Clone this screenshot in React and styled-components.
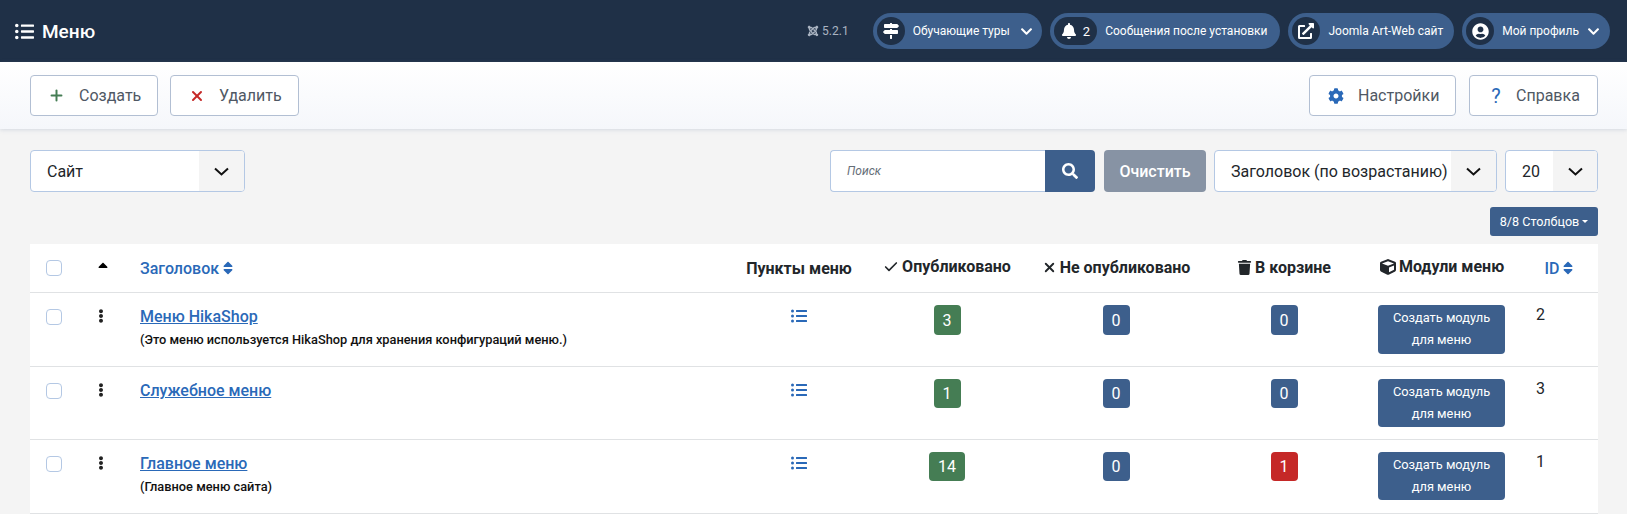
import styled, { createGlobalStyle } from "styled-components";
import {
  FaBell,
  FaChevronDown,
  FaCog,
  FaCube,
  FaEllipsisV,
  FaExternalLinkAlt,
  FaJoomla,
  FaListUl,
  FaMapSigns,
  FaSearch,
  FaSort,
  FaSortUp,
  FaTrash,
  FaUserCircle,
} from "react-icons/fa";
import { Check, Plus, X } from "lucide-react";

const colors = {
  dark: "#1f3047",
  blue: "#3d5f8c",
  link: "#2a69b8",
  green: "#457d54",
  red: "#c52827",
  page: "#f4f4f4",
  border: "#b2bfd3",
  field: "#b4c8e4",
  text: "#22262a",
};

const GlobalStyle = createGlobalStyle`
  html, body {
    margin: 0;
    padding: 0;
    height: 514px;
    overflow: hidden;
    background: ${colors.page};
    font-family: Roboto, "Liberation Sans", sans-serif;
    font-size: 16px;
    color: ${colors.text};
  }
  * { box-sizing: border-box; }
`;

const Header = styled.header`
  height: 62px;
  background: ${colors.dark};
  display: flex;
  align-items: center;
  padding: 0 17px 0 15px;
  color: #fff;
`;

const PageTitle = styled.h1`
  margin: 0;
  flex: 1;
  display: flex;
  align-items: center;
  gap: 8px;
  font-size: 19px;
  font-weight: 500;
  line-height: 1;
`;

const Version = styled.span`
  display: flex;
  align-items: center;
  gap: 3px;
  font-size: 12px;
  color: #aab4c2;
  margin-right: 24px;
`;

const Pills = styled.nav`
  display: flex;
  gap: 8px;
`;

const Pill = styled.div`
  height: 36px;
  display: flex;
  align-items: center;
  padding: 0 ${(p) => p.$end || 9}px 0 4px;
  background: ${colors.blue};
  border-radius: 18px;
  font-size: 12px;
  font-weight: 400;
  white-space: nowrap;
`;

const PillIcon = styled.span`
  min-width: 28px;
  height: 28px;
  padding: ${(p) => (p.$wide ? "0 7px" : "0")};
  display: flex;
  align-items: center;
  justify-content: center;
  gap: 6px;
  background: ${colors.dark};
  border-radius: 14px;
  font-size: 13px;
  margin-right: 8px;
`;

const PillCaret = styled(FaChevronDown)`
  font-size: 13px;
  margin-left: ${(p) => p.$gap || 8}px;
`;

const Toolbar = styled.div`
  height: 67px;
  padding: 13px 29px 0 30px;
  display: flex;
  gap: 12px;
  background: linear-gradient(#fff, #f5f7fb);
  box-shadow: 0 1px 4px rgba(120, 140, 170, 0.25);
`;

const ToolButton = styled.button`
  width: ${(p) => p.$width}px;
  height: 41px;
  padding: 0 0 0 ${(p) => p.$pad || 18}px;
  display: flex;
  align-items: center;
  gap: 14px;
  margin-left: ${(p) => (p.$push ? "auto" : "0")};
  margin-right: ${(p) => p.$after || 0}px;
  background: #fff;
  border: 1px solid ${colors.border};
  border-radius: 4px;
  font: inherit;
  color: #4f5864;
`;

const HelpMark = styled.span`
  width: 12px;
  text-align: center;
  font-size: 20px;
  line-height: 1;
  color: ${colors.link};
`;

const Content = styled.main`
  padding: 21px 29px 0 30px;
`;

const Filters = styled.div`
  display: flex;
  align-items: center;
  gap: 8px;
`;

const SelectBox = styled.div`
  width: ${(p) => p.$width}px;
  height: 42px;
  display: flex;
  align-items: center;
  background: #fff;
  border: 1px solid ${colors.field};
  border-radius: 4px;
  overflow: hidden;
  margin-right: ${(p) => (p.$grow ? "auto" : "0")};
`;

const SelectText = styled.span`
  flex: 1;
  padding-left: 16px;
  white-space: nowrap;
`;

const SelectArrow = styled.span`
  width: ${(p) => p.$width}px;
  height: 100%;
  flex: none;
  display: flex;
  align-items: center;
  justify-content: center;
  background: ${colors.page};
  color: #111;
`;

const SearchGroup = styled.div`
  width: 265px;
  height: 42px;
  display: flex;
  margin-right: 1px;
`;

const SearchInput = styled.div`
  flex: 1;
  display: flex;
  align-items: center;
  padding-left: 16px;
  background: #fff;
  border: 1px solid ${colors.field};
  border-right: 0;
  border-radius: 4px 0 0 4px;
  font-size: 12px;
  font-style: italic;
  color: #666e78;
`;

const SearchButton = styled.button`
  width: 50px;
  border: 0;
  border-radius: 0 4px 4px 0;
  background: ${colors.blue};
  color: #fff;
  font-size: 16px;
  display: flex;
  align-items: center;
  justify-content: center;
`;

const ClearButton = styled.button`
  width: 102px;
  height: 42px;
  border: 0;
  border-radius: 4px;
  background: #8793a4;
  color: #fff;
  font: inherit;
  font-weight: 500;
`;

const ColumnsRow = styled.div`
  display: flex;
  justify-content: flex-end;
  margin: 15px 0 8px;
`;

const ColumnsButton = styled.button`
  height: 29px;
  width: 108px;
  border: 0;
  border-radius: 3px;
  background: ${colors.blue};
  color: #fff;
  font-family: inherit;
  font-size: 12.6px;
  font-weight: 400;
  display: flex;
  align-items: center;
  justify-content: center;
  gap: 3px;
  &::after {
    content: "";
    border-top: 3px solid #fff;
    border-left: 3px solid transparent;
    border-right: 3px solid transparent;
  }
`;

const Table = styled.table`
  width: 1568px;
  table-layout: fixed;
  border-collapse: separate;
  border-spacing: 0;
  background: #fff;
`;

const HeadCell = styled.th`
  height: 49px;
  padding: 0 0 0 ${(p) => p.$pad || 0}px;
  font-size: 16px;
  font-weight: ${(p) => (p.$link ? 500 : 700)};
  white-space: nowrap;
  text-align: ${(p) => p.$align || "center"};
  color: ${(p) => (p.$link ? colors.link : colors.text)};
  border-bottom: 1px solid #e0e2e4;
`;

const HeadLabel = styled.span`
  display: inline-flex;
  align-items: center;
  gap: ${(p) => p.$gap ?? 3}px;
`;

const OrderArrow = styled(FaSortUp)`
  margin-top: 5px;
`;

const Row = styled.tr`
  height: ${(p) => p.$height}px;
`;

const Cell = styled.td`
  padding: ${(p) => p.$top ?? 12}px 0 0 ${(p) => p.$pad || 0}px;
  vertical-align: top;
  text-align: ${(p) => p.$align || "center"};
  border-bottom: 1px solid #e0e2e4;
`;

const Box = styled.span`
  display: block;
  width: 16px;
  height: 16px;
  background: #fff;
  border: 1px solid ${colors.field};
  border-radius: 4px;
`;

const TitleLink = styled.a`
  display: block;
  color: ${colors.link};
  font-weight: 500;
  text-decoration: underline;
  line-height: 22px;
`;

const Note = styled.div`
  margin-top: 4px;
  font-size: 12.8px;
  font-weight: 500;
  line-height: 16px;
  color: #111;
`;

const Count = styled.span`
  display: inline-flex;
  align-items: center;
  justify-content: center;
  min-width: 27px;
  height: ${(p) => p.$height}px;
  padding: 0 9px;
  border-radius: 4px;
  background: ${(p) => p.$bg};
  color: #fff;
  font-weight: 400;
`;

const ModuleButton = styled.span`
  display: block;
  width: 127px;
  height: ${(p) => p.$height}px;
  padding: 2px 12px 0;
  border-radius: 4px;
  background: ${colors.blue};
  color: #fff;
  font-size: 12.8px;
  font-weight: 400;
  line-height: 22px;
  text-align: center;
`;

const rows = [
  { title: "Меню HikaShop", note: "(Это меню используется HikaShop для хранения конфигураций меню.)", published: 3, trashed: 0, id: 2, height: 74, badge: 30, button: 49 },
  { title: "Служебное меню", published: 1, trashed: 0, id: 3, height: 73, badge: 29, button: 48 },
  { title: "Главное меню", note: "(Главное меню сайта)", published: 14, trashed: 1, id: 1, height: 74, badge: 29, button: 48 },
];

const columns = [56, 42, 607, 128, 168, 170, 166, 150, 81];

export default function App() {
  return (
    <>
      <GlobalStyle />
      <Header>
        <PageTitle>
          <FaListUl size={19} />
          Меню
        </PageTitle>
        <Version>
          <FaJoomla size={12} />
          5.2.1
        </Version>
        <Pills>
          <Pill>
            <PillIcon><FaMapSigns size={16} /></PillIcon>
            Обучающие туры
            <PillCaret $gap={10} />
          </Pill>
          <Pill $end={13}>
            <PillIcon $wide><FaBell size={16} />2</PillIcon>
            Сообщения после установки
          </Pill>
          <Pill $end={11}>
            <PillIcon><FaExternalLinkAlt size={16} /></PillIcon>
            Joomla Art-Web сайт
          </Pill>
          <Pill $end={10}>
            <PillIcon><FaUserCircle size={17} /></PillIcon>
            Мой профиль
            <PillCaret />
          </Pill>
        </Pills>
      </Header>

      <Toolbar>
        <ToolButton $width={128} $pad={17}>
          <Plus size={17} color={colors.green} strokeWidth={2.8} />
          Создать
        </ToolButton>
        <ToolButton $width={129}>
          <X size={16} color={colors.red} strokeWidth={3} />
          Удалить
        </ToolButton>
        <ToolButton $width={147} $push $after={1}>
          <FaCog size={16} color={colors.link} />
          Настройки
        </ToolButton>
        <ToolButton $width={129} $pad={20}>
          <HelpMark>?</HelpMark>
          Справка
        </ToolButton>
      </Toolbar>

      <Content>
        <Filters>
          <SelectBox $width={215} $grow>
            <SelectText>Сайт</SelectText>
            <SelectArrow $width={45}><ChevronThin /></SelectArrow>
          </SelectBox>
          <SearchGroup>
            <SearchInput>Поиск</SearchInput>
            <SearchButton><FaSearch /></SearchButton>
          </SearchGroup>
          <ClearButton>Очистить</ClearButton>
          <SelectBox $width={283}>
            <SelectText>Заголовок (по возрастанию)</SelectText>
            <SelectArrow $width={45}><ChevronThin /></SelectArrow>
          </SelectBox>
          <SelectBox $width={93}>
            <SelectText>20</SelectText>
            <SelectArrow $width={44}><ChevronThin /></SelectArrow>
          </SelectBox>
        </Filters>

        <ColumnsRow>
          <ColumnsButton>8/8 Столбцов</ColumnsButton>
        </ColumnsRow>

        <Table>
          <colgroup>
            {columns.map((width, i) => (
              <col key={i} style={{ width }} />
            ))}
          </colgroup>
          <thead>
            <tr>
              <HeadCell $align="left" $pad={16}><Box /></HeadCell>
              <HeadCell $align="left" $pad={9}>
                <HeadLabel><OrderArrow size={16} color="#000" /></HeadLabel>
              </HeadCell>
              <HeadCell $align="left" $pad={12} $link>
                <HeadLabel $gap={1}>Заголовок<FaSort size={16} /></HeadLabel>
              </HeadCell>
              <HeadCell>Пункты меню</HeadCell>
              <HeadCell><HeadLabel><Check size={16} strokeWidth={2.5} />Опубликовано</HeadLabel></HeadCell>
              <HeadCell><HeadLabel><X size={15} strokeWidth={3} />Не опубликовано</HeadLabel></HeadCell>
              <HeadCell><HeadLabel><FaTrash size={15} />В корзине</HeadLabel></HeadCell>
              <HeadCell><HeadLabel><FaCube size={16} />Модули меню</HeadLabel></HeadCell>
              <HeadCell $link $pad={6}><HeadLabel $gap={1}>ID<FaSort size={16} /></HeadLabel></HeadCell>
            </tr>
          </thead>
          <tbody>
            {rows.map((row) => (
              <Row key={row.id} $height={row.height}>
                <Cell $align="left" $pad={16} $top={16}><Box /></Cell>
                <Cell $align="left" $pad={8} $top={15}><FaEllipsisV size={14} color="#222" /></Cell>
                <Cell $align="left" $pad={12} $top={13}>
                  <TitleLink>{row.title}</TitleLink>
                  {row.note && <Note>{row.note}</Note>}
                </Cell>
                <Cell $top={15}><FaListUl size={16} color={colors.link} /></Cell>
                <Cell><Count $bg={colors.green} $height={row.badge}>{row.published}</Count></Cell>
                <Cell><Count $bg={colors.blue} $height={row.badge}>0</Count></Cell>
                <Cell><Count $bg={row.trashed ? colors.red : colors.blue} $height={row.badge}>{row.trashed}</Count></Cell>
                <Cell $align="left" $pad={11}><ModuleButton $height={row.button}>Создать модуль для меню</ModuleButton></Cell>
                <Cell $align="left" $pad={19}>{row.id}</Cell>
              </Row>
            ))}
          </tbody>
        </Table>
      </Content>
    </>
  );
}

function ChevronThin() {
  return (
    <svg width="15" height="9" viewBox="0 0 15 9" fill="none" stroke="currentColor" strokeWidth="2" aria-hidden="true">
      <path d="M1 1.5l6.5 6 6.5-6" />
    </svg>
  );
}
